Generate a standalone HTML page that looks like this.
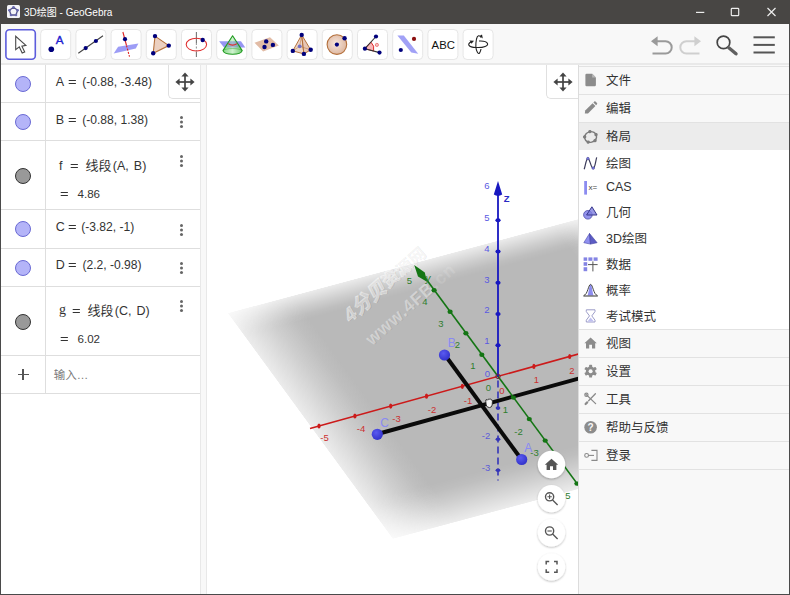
<!DOCTYPE html>
<html lang="zh-CN">
<head>
<meta charset="utf-8">
<title>3D绘图 - GeoGebra</title>
<style>
*{box-sizing:border-box;margin:0;padding:0}
html,body{width:790px;height:595px;overflow:hidden;background:#fff}
body{font-family:"Liberation Sans","Noto Sans CJK SC",sans-serif;color:#333;position:relative}
#win{position:absolute;left:0;top:0;width:790px;height:595px;overflow:hidden;background:#fff}
.abs{position:absolute}
/* title bar */
#title{left:0;top:0;width:790px;height:24px;background:#484644;color:#fff;font-size:10px;line-height:26px}
#title .txt{position:absolute;left:24px;top:0;white-space:nowrap;letter-spacing:0}
/* toolbar */
#toolbar{left:0;top:24px;width:790px;height:41px;background:#f8f8f8;border-bottom:2px solid #e9e9e9}
.tb{position:absolute;top:5px;width:31px;height:31px;border:1px solid #e2e2e2;border-radius:4px;background:#fff}
.tb.sel{border:2px solid #6161e0;border-radius:4px}
.tb svg{position:absolute;left:0;top:0;width:29px;height:29px;overflow:visible}
.tb.sel svg{left:-1px;top:-1px}
/* algebra */
#alg{left:0;top:0;width:200px;height:594px}
.hl{position:absolute;left:1px;width:199px;height:1px;background:#dedede}
.vl{position:absolute;left:45px;top:65px;width:1px;height:329px;background:#dedede}
.dot{position:absolute;left:14.7px;width:16px;height:16px;border-radius:50%;background:#b4b4f8;border:1px solid #6a6ad4}
.dot.g{background:#999;border-color:#333}
.t{position:absolute;left:0;height:16px;font-size:12.5px;line-height:16px;color:#333;white-space:nowrap}
.t span{position:absolute;top:0}
.t .eq{transform:scaleX(1.18);transform-origin:0 50%}
.t .cj{font-size:13px}
.more{position:absolute;left:180px;width:3px;height:3px;border-radius:50%;background:#666;box-shadow:0 4.5px 0 #666,0 9px 0 #666}
.mvb{position:absolute;top:65px;height:34px;border:1px solid #e0e0e0;border-top:none;border-right:none;border-bottom-left-radius:5px;background:#fff}
/* splitter */
#split{left:200px;top:65px;width:7px;height:529px;background:#f8f8f8;border-left:1px solid #e8e8e8;border-right:1px solid #e8e8e8;z-index:2}
/* 3d */
#view{left:206px;top:65px;width:372px;height:529px;background:#fff;overflow:hidden}
/* menu */
#menu{left:578px;top:65px;width:211px;height:529px;background:#f8f8f8;border-left:1px solid #dcdcdc}
.mh{position:absolute;left:0;width:210px;height:28px;border-top:1px solid #e2e2e2;font-size:12.5px;line-height:28px;color:#333}
.mh span,.mi span{position:absolute;left:27px;white-space:nowrap}
.mi{position:absolute;left:0;width:210px;height:26px;font-size:12.5px;line-height:26px;color:#333}
.mh svg,.mi svg{position:absolute;left:4px;top:6px;width:16px;height:16px;overflow:visible}
#sub{position:absolute;left:0;top:85px;width:210px;height:179px;background:#fff}
</style>
</head>
<body>
<div id="win">

<!-- TITLE -->
<div id="title" class="abs">
  <svg class="abs" style="left:7px;top:5px" width="13" height="13" viewBox="0 0 13 13">
    <rect x="0" y="0" width="13" height="13" rx="1.5" fill="#f4f4f8"/>
    <polygon points="6.5,2.2 10.6,5.2 9,10 4,10 2.4,5.2" fill="none" stroke="#55558a" stroke-width="1.3"/>
    <g fill="#6a6ab0"><circle cx="6.5" cy="2.2" r="1.3"/><circle cx="10.6" cy="5.2" r="1.3"/><circle cx="9" cy="10" r="1.3"/><circle cx="4" cy="10" r="1.3"/><circle cx="2.4" cy="5.2" r="1.3"/></g>
  </svg>
  <div class="txt">3D绘图 - GeoGebra</div>
  <svg class="abs" style="left:690px;top:0" width="100" height="24" viewBox="0 0 100 24">
    <g stroke="#ececec" stroke-width="1.2" fill="none">
      <line x1="6" y1="12.4" x2="14.3" y2="12.4"/>
      <rect x="41.3" y="8.3" width="7.4" height="7.4" rx="0.8"/>
      <path d="M77.5 8 L85.5 16 M85.5 8 L77.5 16"/>
    </g>
  </svg>
</div>

<!-- TOOLBAR -->
<div id="toolbar" class="abs">
<svg class="abs" style="left:0;top:0" width="790" height="41" viewBox="0 24 790 41" font-family="Liberation Sans, sans-serif">
  <defs>
    <radialGradient id="sg" cx="0.45" cy="0.45" r="0.6"><stop offset="0" stop-color="#f6e6dc"/><stop offset="1" stop-color="#dcb49c"/></radialGradient>
    <linearGradient id="cg" x1="0" y1="0" x2="1" y2="0"><stop offset="0" stop-color="#6fd06f"/><stop offset="0.5" stop-color="#c8f0c8"/><stop offset="1" stop-color="#58c058"/></linearGradient>
  </defs>
  <!-- button frames -->
  <g fill="#fff" stroke="#e6e6e6" stroke-width="1">
    <rect x="40.7" y="29.5" width="30" height="30" rx="4"/><rect x="75.9" y="29.5" width="30" height="30" rx="4"/><rect x="111.1" y="29.5" width="30" height="30" rx="4"/>
    <rect x="146.3" y="29.5" width="30" height="30" rx="4"/><rect x="181.5" y="29.5" width="30" height="30" rx="4"/><rect x="216.7" y="29.5" width="30" height="30" rx="4"/>
    <rect x="251.9" y="29.5" width="30" height="30" rx="4"/><rect x="287.1" y="29.5" width="30" height="30" rx="4"/><rect x="322.3" y="29.5" width="30" height="30" rx="4"/>
    <rect x="357.5" y="29.5" width="30" height="30" rx="4"/><rect x="392.7" y="29.5" width="30" height="30" rx="4"/><rect x="427.9" y="29.5" width="30" height="30" rx="4"/>
    <rect x="463.1" y="29.5" width="30" height="30" rx="4"/>
  </g>
  <rect x="5.9" y="29.7" width="29.4" height="29.6" rx="3.5" fill="#fff" stroke="#5c5cdc" stroke-width="1.6"/>
  <!-- 0 move -->
  <path d="M15.7 36.3 L15.7 49.6 L19.3 46.9 L22.2 53 L24.7 51.9 L21.9 46.2 L25.9 45.4 Z" fill="#fff" stroke="#4a4a4a" stroke-width="1.1" stroke-linejoin="miter"/>
  <!-- 1 point -->
  <circle cx="51.3" cy="49.3" r="2.8" fill="#00007c"/>
  <text x="55.8" y="44.4" font-size="11.6" fill="#2020d0" stroke="#2020d0" stroke-width="0.35">A</text>
  <!-- 2 line -->
  <line x1="78.3" y1="53.2" x2="103" y2="35.8" stroke="#444" stroke-width="1.1"/>
  <circle cx="85.7" cy="48.1" r="2.1" fill="#00007c"/><circle cx="95.9" cy="41" r="2.1" fill="#00007c"/>
  <!-- 3 perpendicular -->
  <line x1="122.9" y1="32" x2="126.5" y2="45.5" stroke="#e02020" stroke-width="1.1"/>
  <polygon points="113.7,53.5 118.1,46.8 138.4,43.4 135.8,48.5" fill="#8c8cf4" fill-opacity="0.85"/>
  <line x1="126.5" y1="45.5" x2="129.5" y2="56.7" stroke="#e02020" stroke-width="1.1" stroke-dasharray="2 1.3"/>
  <circle cx="125" cy="39.2" r="2.1" fill="#00007c"/>
  <!-- 4 polygon -->
  <polygon points="155,36.1 168.8,45.6 153.2,53.2" fill="#ecd0c0" stroke="#b4703c" stroke-width="1.1"/>
  <circle cx="155" cy="36.1" r="2.2" fill="#00007c"/><circle cx="168.8" cy="45.6" r="2.2" fill="#00007c"/><circle cx="153.2" cy="53.2" r="2.2" fill="#00007c"/>
  <!-- 5 circle axis -->
  <line x1="196.4" y1="32" x2="196.4" y2="43" stroke="#777" stroke-width="1.1"/>
  <line x1="196.4" y1="43" x2="196.4" y2="51" stroke="#999" stroke-width="1.1" stroke-dasharray="2 1.5"/>
  <line x1="196.4" y1="51.5" x2="196.4" y2="57" stroke="#777" stroke-width="1.1"/>
  <ellipse cx="196.4" cy="44.6" rx="10.2" ry="6.4" fill="none" stroke="#e03030" stroke-width="1.1"/>
  <circle cx="202.7" cy="40" r="2.2" fill="#00007c"/>
  <!-- 6 cone -->
  <polygon points="219.1,41.2 241,41.2 245.3,47.6 224,47.6" fill="#7c7cf0" fill-opacity="0.8"/>
  <path d="M232.6 35.8 L223 50.6 A9.7 4.2 0 0 0 242.2 50.6 Z" fill="url(#cg)" fill-opacity="0.85" stroke="#1e9a1e" stroke-width="1.1" stroke-linejoin="round"/>
  <path d="M223 50.6 A9.7 2.4 0 0 1 242.2 50.6" fill="none" stroke="#1e9a1e" stroke-width="0.7" stroke-opacity="0.6"/>
  <path d="M226.5 47.6 L238.8 47.6 L236.5 41.2 L228.7 41.2 Z" fill="#6a6adc" fill-opacity="0.35"/>
  <path d="M228.2 43.6 Q232.6 46.6 237 43.6" fill="none" stroke="#e02828" stroke-width="1.1"/>
  <!-- 7 plane 3 pts -->
  <polygon points="254.5,42.8 270,37.2 278.8,45.6 263.1,51.4" fill="#e2bca6"/>
  <circle cx="266.2" cy="41.4" r="2.2" fill="#00007c"/><circle cx="272.9" cy="44.9" r="2.2" fill="#00007c"/><circle cx="264.5" cy="47" r="2.2" fill="#00007c"/>
  <!-- 8 pyramid -->
  <g stroke="#b4703c" stroke-width="1" stroke-linejoin="round">
    <polygon points="301.7,34.9 292.8,50.9 303.9,53.9" fill="#ecd0c0" fill-opacity="0.9"/>
    <polygon points="301.7,34.9 303.9,53.9 310.7,49.8" fill="#e4c0ac" fill-opacity="0.9"/>
    <path d="M292.8 50.9 L299.7 46.3 L310.7 49.8 M299.7 46.3 L301.7 34.9" fill="none" stroke-width="0.7" stroke-opacity="0.7"/>
  </g>
  <circle cx="299.7" cy="46.3" r="1.9" fill="#7070c8"/>
  <circle cx="301.7" cy="34.9" r="2.2" fill="#00007c"/><circle cx="292.8" cy="50.9" r="2.2" fill="#00007c"/><circle cx="303.9" cy="53.9" r="2.2" fill="#00007c"/><circle cx="310.7" cy="49.8" r="2.2" fill="#00007c"/>
  <!-- 9 sphere -->
  <circle cx="336.9" cy="44.6" r="9.8" fill="url(#sg)" stroke="#b4703c" stroke-width="1.1"/>
  <circle cx="336.9" cy="44.6" r="2.1" fill="#00007c"/><circle cx="344.6" cy="38.3" r="2.2" fill="#00007c"/>
  <!-- 10 angle -->
  <path d="M364.9 48.7 L370.9 42.1 A9 9 0 0 1 373.6 51 Z" fill="#f8b8b8" stroke="#e03030" stroke-width="1"/>
  <line x1="364.9" y1="48.7" x2="376" y2="36.5" stroke="#333" stroke-width="1.1"/><line x1="364.9" y1="48.7" x2="379.5" y2="52.6" stroke="#333" stroke-width="1.1"/>
  <circle cx="376.9" cy="44.9" r="1.6" fill="#f8c0c0" stroke="#e86060" stroke-width="0.7"/>
  <circle cx="364.9" cy="48.7" r="2.1" fill="#00007c"/><circle cx="376" cy="36.5" r="2.1" fill="#00007c"/><circle cx="379.5" cy="52.6" r="2.1" fill="#00007c"/>
  <!-- 11 reflect -->
  <polygon points="397.4,35.6 403.8,35.6 418.2,53.7 411.3,52.4" fill="#9090f4" fill-opacity="0.85"/>
  <circle cx="414" cy="38.9" r="2.1" fill="#8c1010"/><circle cx="400.8" cy="50" r="2.1" fill="#00007c"/>
  <!-- 12 ABC -->
  <text x="431.6" y="48.8" font-size="11.3" fill="#111">ABC</text>
  <!-- 13 rotate view -->
  <g fill="none" stroke="#222" stroke-width="1.1">
    <path d="M471 42 C467 44 468 47 476 47.5 C484 48 488.5 45.5 487.5 43.5 C486.5 41.5 482 40.8 479 41"/>
    <path d="M481 37.5 C479.5 35 477.5 35 476.5 39 C475.5 44 476 50 477.5 52.5 C479 55 480.5 52 481 49"/>
  </g>
  <polygon points="469.5,40.5 474,40.8 471.5,43.8" fill="#222"/><polygon points="479.5,36 482.8,38.5 482,34.5" fill="#222"/>
  <!-- undo -->
  <g fill="none" stroke-width="2" stroke-linejoin="miter">
    <path d="M656 41.2 H665.5 A6.2 6.2 0 0 1 665.5 53.6 H652.5" stroke="#9a9a9a"/>
    <path d="M657.6 36.2 L651 41.2 L657.6 46.2 Z" fill="#9a9a9a" stroke="none"/>
    <path d="M696 41.2 H686.5 A6.2 6.2 0 0 0 686.5 53.6 H699.5" stroke="#cfcfcf"/>
    <path d="M694.4 36.2 L701 41.2 L694.4 46.2 Z" fill="#cfcfcf" stroke="none"/>
  </g>
  <!-- search -->
  <circle cx="723.5" cy="42.4" r="6.3" fill="none" stroke="#444" stroke-width="1.7"/>
  <line x1="728.8" y1="47.8" x2="736" y2="53.8" stroke="#606060" stroke-width="3.4" stroke-linecap="round"/>
  <!-- menu -->
  <g stroke="#555" stroke-width="2"><line x1="753.5" y1="37.3" x2="774.8" y2="37.3"/><line x1="753.5" y1="44.9" x2="774.8" y2="44.9"/><line x1="753.5" y1="52.5" x2="774.8" y2="52.5"/></g>
</svg>
</div>

<!-- ALGEBRA -->
<div id="alg" class="abs">
  <div class="hl" style="top:102px"></div><div class="hl" style="top:140px"></div><div class="hl" style="top:209px"></div>
  <div class="hl" style="top:248px"></div><div class="hl" style="top:286px"></div><div class="hl" style="top:355px"></div><div class="hl" style="top:393px"></div>
  <div class="vl"></div>
  <div class="dot" style="top:75.5px"></div>
  <div class="dot" style="top:113.5px"></div>
  <div class="dot g" style="top:167.5px"></div>
  <div class="dot" style="top:221px"></div>
  <div class="dot" style="top:259.5px"></div>
  <div class="dot g" style="top:313.5px"></div>
  <div class="t" style="top:74px"><span style="left:55.7px">A</span><span class="eq" style="left:67.6px">=</span><span style="left:82.2px;font-size:12.1px">(-0.88, -3.48)</span></div>
  <div class="t" style="top:112px"><span style="left:55.7px">B</span><span class="eq" style="left:67.6px">=</span><span style="left:82.2px;font-size:12.1px">(-0.88, 1.38)</span></div>
  <div class="t" style="top:157.5px"><span style="left:59px">f</span><span class="eq" style="left:70.3px">=</span><span class="cj" style="left:85.4px">线段</span><span style="left:112.8px;word-spacing:1.6px">(A, B)</span></div>
  <div class="t" style="top:185.5px"><span class="eq" style="left:60.4px">=</span><span style="left:77.5px;font-size:11.6px">4.86</span></div>
  <div class="t" style="top:219px"><span style="left:55.7px">C</span><span class="eq" style="left:67.8px">=</span><span style="left:81.2px;font-size:12.1px">(-3.82, -1)</span></div>
  <div class="t" style="top:257px"><span style="left:55.7px">D</span><span class="eq" style="left:68.2px">=</span><span style="left:82.4px;font-size:12.1px">(2.2, -0.98)</span></div>
  <div class="t" style="top:303px"><span style="left:59px;font-family:'Liberation Serif',serif;font-size:14px;top:-1.5px">g</span><span class="eq" style="left:71.6px">=</span><span class="cj" style="left:87.4px">线段</span><span style="left:114.8px;word-spacing:1.6px">(C, D)</span></div>
  <div class="t" style="top:331px"><span class="eq" style="left:60.4px">=</span><span style="left:77.5px;font-size:11.6px">6.02</span></div>
  <div class="t" style="top:366.5px"><span style="left:53.8px;color:#7a7a7a;font-size:11.5px">输入…</span></div>
  <div class="more" style="top:116px"></div><div class="more" style="top:154.5px"></div><div class="more" style="top:223.5px"></div><div class="more" style="top:262px"></div><div class="more" style="top:300px"></div>
  <div class="abs" style="left:17.5px;top:374px;width:11px;height:1.2px;background:#555"></div><div class="abs" style="left:22.4px;top:369px;width:1.2px;height:11px;background:#555"></div>
  <div class="mvb" style="left:168px;width:32px"><svg class="abs" style="left:6.1px;top:6.8px" width="20" height="20" viewBox="0 0 20 20"><g fill="#444"><rect x="9.15" y="3" width="1.7" height="14"/><rect x="3" y="9.15" width="14" height="1.7"/><polygon points="10,0.4 13.6,4.6 6.4,4.6"/><polygon points="10,19.6 13.6,15.4 6.4,15.4"/><polygon points="0.4,10 4.6,6.4 4.6,13.6"/><polygon points="19.6,10 15.4,6.4 15.4,13.6"/></g></svg></div>
</div>

<div id="split" class="abs"></div>

<!-- 3D VIEW -->
<div id="view" class="abs">
<svg class="abs" style="left:0;top:0" width="372" height="529" viewBox="206 65 372 529" font-family="Liberation Sans, sans-serif">
  <defs>
    <linearGradient id="gl" gradientUnits="userSpaceOnUse" x1="0" y1="0" x2="1.05" y2="0">
      <stop offset="0" stop-color="#bdbdbd" stop-opacity="0.16"/><stop offset="0.5" stop-color="#bdbdbd" stop-opacity="0.68"/><stop offset="1" stop-color="#bdbdbd" stop-opacity="1"/>
    </linearGradient>
    <linearGradient id="gt" gradientUnits="userSpaceOnUse" x1="0" y1="0" x2="0" y2="1.05">
      <stop offset="0" stop-color="#bdbdbd" stop-opacity="0.16"/><stop offset="0.5" stop-color="#bdbdbd" stop-opacity="0.68"/><stop offset="1" stop-color="#bdbdbd" stop-opacity="1"/>
    </linearGradient>
    <linearGradient id="gb" gradientUnits="userSpaceOnUse" x1="0" y1="10.4" x2="0" y2="9.35">
      <stop offset="0" stop-color="#bdbdbd" stop-opacity="0.16"/><stop offset="0.5" stop-color="#bdbdbd" stop-opacity="0.68"/><stop offset="1" stop-color="#bdbdbd" stop-opacity="1"/>
    </linearGradient>
    <linearGradient id="gr" gradientUnits="userSpaceOnUse" x1="10.4" y1="0" x2="9.35" y2="0">
      <stop offset="0" stop-color="#bdbdbd" stop-opacity="0.16"/><stop offset="0.5" stop-color="#bdbdbd" stop-opacity="0.68"/><stop offset="1" stop-color="#bdbdbd" stop-opacity="1"/>
    </linearGradient>
    <filter id="soft" x="-5%" y="-5%" width="110%" height="110%"><feGaussianBlur stdDeviation="0.5"/></filter>
    <radialGradient id="sph" cx="0.4" cy="0.35" r="0.7">
      <stop offset="0" stop-color="#5a5af0"/>
      <stop offset="1" stop-color="#3030c8"/>
    </radialGradient>
  </defs>
  <!-- plane -->
  <defs><linearGradient id="gu" x1="0" y1="0" x2="1" y2="0"><stop offset="0.0000" stop-color="#b9b9b9" stop-opacity="0.270"/><stop offset="0.0865" stop-color="#b9b9b9" stop-opacity="0.700"/><stop offset="0.1385" stop-color="#b9b9b9" stop-opacity="0.920"/><stop offset="0.1731" stop-color="#b9b9b9" stop-opacity="1.000"/><stop offset="0.8750" stop-color="#b9b9b9" stop-opacity="1.000"/><stop offset="0.9000" stop-color="#b9b9b9" stop-opacity="0.920"/><stop offset="0.9375" stop-color="#b9b9b9" stop-opacity="0.700"/><stop offset="1.0000" stop-color="#b9b9b9" stop-opacity="0.270"/></linearGradient><linearGradient id="gv" x1="0" y1="0" x2="0" y2="1"><stop offset="0.0000" stop-color="#fff" stop-opacity="0.270"/><stop offset="0.0505" stop-color="#fff" stop-opacity="0.700"/><stop offset="0.0808" stop-color="#fff" stop-opacity="0.920"/><stop offset="0.1010" stop-color="#fff" stop-opacity="1.000"/><stop offset="0.8365" stop-color="#fff" stop-opacity="1.000"/><stop offset="0.8692" stop-color="#fff" stop-opacity="0.920"/><stop offset="0.9183" stop-color="#fff" stop-opacity="0.700"/><stop offset="1.0000" stop-color="#fff" stop-opacity="0.270"/></linearGradient><mask id="mv" maskUnits="userSpaceOnUse" x="0" y="0" width="10.4" height="10.4"><rect x="0" y="0" width="10.4" height="10.4" fill="url(#gv)"/></mask></defs>
  <g transform="matrix(35.8,-9.6,15.885,21.73,227.5,313)"><g mask="url(#mv)"><rect x="0" y="0" width="10.4" height="10.4" fill="url(#gu)"/></g></g>
  <!-- watermark -->
  <g font-family="Liberation Sans, Noto Sans CJK SC, sans-serif" font-weight="900">
    <g transform="translate(350.5,323) rotate(-41.4)">
      <text x="1" y="1.2" font-size="19.5" font-style="italic" fill="#000" fill-opacity="0.07">4分贝<tspan font-size="17" font-style="normal" dx="1" dy="-1">资源网</tspan></text>
      <text x="0" y="0" font-size="19.5" font-style="italic" fill="#fff" fill-opacity="0.4" stroke="#fff" stroke-opacity="0.4" stroke-width="0.7">4分贝<tspan font-size="17" font-style="normal" dx="1" dy="-1">资源网</tspan></text>
    </g>
    <g transform="translate(372,346) rotate(-41.4)" font-weight="bold">
      <text x="1" y="1.2" font-size="17.5" letter-spacing="1" fill="#000" fill-opacity="0.06">www.4FB<tspan fill-opacity="0.02">.cn</tspan></text>
      <text x="0" y="0" font-size="17.5" letter-spacing="1" fill="#fff" fill-opacity="0.38">www.4FB<tspan fill-opacity="0.14">.cn</tspan></text>
    </g>
  </g>
  <!-- x axis red -->
  <g stroke="#cc1a1a" fill="#cc1a1a">
    <line x1="310" y1="428.4" x2="580" y2="353.6" stroke-width="1.6"/>
    <g stroke="none">
      <ellipse cx="319" cy="426" rx="1.6" ry="2.6"/><ellipse cx="354.9" cy="416" rx="1.6" ry="2.6"/><ellipse cx="390.7" cy="406.1" rx="1.6" ry="2.6"/>
      <ellipse cx="426.5" cy="396.2" rx="1.6" ry="2.6"/><ellipse cx="462.3" cy="386.3" rx="1.6" ry="2.6"/><ellipse cx="533.9" cy="366.4" rx="1.6" ry="2.6"/><ellipse cx="569.7" cy="356.5" rx="1.6" ry="2.6"/>
    </g>
  </g>
  <g fill="#cc3030" font-size="9.5" text-anchor="middle">
    <text x="324.5" y="441.3">-5</text><text x="361" y="432.3">-4</text><text x="396.5" y="422.3">-3</text><text x="432" y="413.3">-2</text>
    <text x="468" y="403.5">-1</text><text x="502" y="393.5">0</text><text x="536.5" y="383.3">1</text><text x="572" y="374.3">2</text>
  </g>
  <!-- z axis dashed lower -->
  <g stroke="#3535b8" fill="#3535b8">
    <line x1="498" y1="380.6" x2="498" y2="480.6" stroke-width="1.6" stroke-dasharray="7 4"/>
    <g stroke="none"><ellipse cx="498" cy="408.1" rx="2.4" ry="1.8"/><ellipse cx="498" cy="439.3" rx="2.4" ry="1.8"/><ellipse cx="498" cy="470.2" rx="2.4" ry="1.8"/></g>
  </g>
  <g fill="#5c5cd8" font-size="9.5" text-anchor="middle">
    <text x="486" y="439.1">-2</text><text x="486" y="470.6">-3</text>
  </g>
  <!-- segments -->
  <g stroke="#0a0a0a" stroke-width="4" stroke-linecap="butt">
    <line x1="377.5" y1="434" x2="580" y2="378.2"/>
    <line x1="445" y1="355" x2="521.5" y2="459.5"/>
  </g>
  <!-- y axis green -->
  <g stroke="#147514" fill="#147514">
    <line x1="420" y1="270.8" x2="578" y2="484.8" stroke-width="1.6"/>
    <polygon points="414.2,264.9 424.8,272.4 427,281.8 418,276.6" stroke="none"/>
    <g stroke="none">
      <ellipse cx="434.1" cy="290.2" rx="2.6" ry="2.2"/><ellipse cx="450.1" cy="311.8" rx="2.6" ry="2.2"/><ellipse cx="465.9" cy="333.3" rx="2.6" ry="2.2"/><ellipse cx="481.8" cy="354.8" rx="2.6" ry="2.2"/>
      <ellipse cx="513.4" cy="397.6" rx="2.6" ry="2.2"/><ellipse cx="529.3" cy="419.1" rx="2.6" ry="2.2"/><ellipse cx="545.2" cy="440.6" rx="2.6" ry="2.2"/><ellipse cx="561" cy="462.1" rx="2.6" ry="2.2"/><ellipse cx="576.9" cy="483.6" rx="2.6" ry="2.2"/>
    </g>
  </g>
  <g fill="#2e7d2e" font-size="9.5" text-anchor="middle">
    <text x="409.5" y="284.3">5</text><text x="425" y="305.3">4</text><text x="441" y="326.8">3</text><text x="457.5" y="348">2</text><text x="473" y="369.3">1</text><text x="488.5" y="391">0</text>
    <text x="505.5" y="413.3">1</text><text x="518.5" y="434.8">-2</text><text x="534.5" y="456.3">-3</text><text x="568" y="499.3">5</text>
    <text x="428" y="281.8" font-size="10" font-style="italic">y</text>
  </g>
  <!-- z axis blue upper -->
  <g stroke="#1818c0" fill="#1818c0">
    <line x1="498" y1="191" x2="498" y2="376.4" stroke-width="1.8"/>
    <path d="M498 181.1 L502.2 194.6 Q498 197.2 493.8 194.6 Z" stroke="none"/>
    <g stroke="none"><ellipse cx="498" cy="220.3" rx="2.6" ry="2"/><ellipse cx="498" cy="251.5" rx="2.6" ry="2"/><ellipse cx="498" cy="282.8" rx="2.6" ry="2"/><ellipse cx="498" cy="314" rx="2.6" ry="2"/><ellipse cx="498" cy="345.2" rx="2.6" ry="2"/></g>
    <circle cx="498" cy="376.4" r="2.2" fill="none" stroke="#702040" stroke-width="1"/>
  </g>
  <g fill="#5a5ae2" font-size="9.5" text-anchor="middle">
    <text x="487" y="189.2">6</text><text x="487" y="220.7">5</text><text x="487" y="251.6">4</text><text x="487" y="282.5">3</text><text x="487" y="313.3">2</text><text x="487" y="344">1</text><text x="487.5" y="376.8">0</text>
    <text x="506.6" y="202.4" font-size="9.5" font-weight="bold" fill="#2a2ac4">Z</text>
  </g>
  <!-- points -->
  <circle cx="444.5" cy="355" r="5.6" fill="url(#sph)"/>
  <circle cx="521.7" cy="459.5" r="5.6" fill="url(#sph)"/>
  <circle cx="377.3" cy="434.3" r="5.6" fill="url(#sph)"/>
  <g fill="#8a8af2" font-size="12">
    <text x="447.8" y="346.6">B</text><text x="524.3" y="452">A</text><text x="380.3" y="426.8">C</text>
  </g>
  <path d="M485.8 401.5 Q485.2 399.4 487 399.6 L487.6 400.2 Q488 398.6 489.4 399.2 Q490.4 398.6 491 399.6 Q492.6 399.6 492.4 401.4 L492.2 405 Q491.6 407.6 489.4 407.6 Q486.8 407.4 486.2 405 Z" fill="#f4f4f4" stroke="#222" stroke-width="0.9"/>
  <!-- view buttons -->
  <defs><filter id="bsh" x="-30%" y="-30%" width="160%" height="170%"><feGaussianBlur in="SourceAlpha" stdDeviation="1.3"/><feOffset dy="1"/><feComponentTransfer><feFuncA type="linear" slope="0.28"/></feComponentTransfer><feMerge><feMergeNode/><feMergeNode in="SourceGraphic"/></feMerge></filter></defs>
  <g filter="url(#bsh)" fill="#fff"><circle cx="551.5" cy="464.5" r="13.7"/><circle cx="551.5" cy="498.6" r="13.7"/><circle cx="551.5" cy="532.8" r="13.7"/><circle cx="551.5" cy="566.9" r="13.7"/></g>
  <path d="M551.5 458.7 L558.2 464.8 H556.4 V470 H553 V466.2 H550 V470 H546.6 V464.8 H544.8 Z" fill="#555"/>
  <g fill="none" stroke="#555" stroke-width="1.4">
    <circle cx="549.6" cy="496.8" r="4.1"/><line x1="552.6" y1="499.9" x2="557.6" y2="504.9"/>
    <path d="M547.4 496.8 H551.8 M549.6 494.6 V499" stroke-width="1.1"/>
    <circle cx="549.6" cy="531" r="4.1"/><line x1="552.6" y1="534.1" x2="557.6" y2="539.1"/>
    <path d="M547.4 531 H551.8" stroke-width="1.1"/>
    <path d="M546.2 564.4 V561.4 H549.2 M554 561.4 H557 V564.4 M557 569.2 V572.2 H554 M549.2 572.2 H546.2 V569.2" stroke-width="1.5"/>
  </g>
</svg>
</div>

<div class="mvb" style="left:546px;width:32px"><svg class="abs" style="left:5.8px;top:6.8px" width="20" height="20" viewBox="0 0 20 20"><g fill="#444"><rect x="9.15" y="3" width="1.7" height="14"/><rect x="3" y="9.15" width="14" height="1.7"/><polygon points="10,0.4 13.6,4.6 6.4,4.6"/><polygon points="10,19.6 13.6,15.4 6.4,15.4"/><polygon points="0.4,10 4.6,6.4 4.6,13.6"/><polygon points="19.6,10 15.4,6.4 15.4,13.6"/></g></svg></div>

<!-- MENU -->
<div id="menu" class="abs">
  <div class="mh" style="top:1px"><span>文件</span></div>
  <div class="mh" style="top:29px"><span>编辑</span></div>
  <div class="mh" style="top:57px;background:#ececec"><span>格局</span></div>
  <div id="sub">
    <div class="mi" style="top:1px"><span>绘图</span></div>
    <div class="mi" style="top:24px"><span>CAS</span></div>
    <div class="mi" style="top:50px"><span>几何</span></div>
    <div class="mi" style="top:76px"><span>3D绘图</span></div>
    <div class="mi" style="top:102px"><span>数据</span></div>
    <div class="mi" style="top:128px"><span>概率</span></div>
    <div class="mi" style="top:154px"><span>考试模式</span></div>
  </div>
  <div class="mh" style="top:264px"><span>视图</span></div>
  <div class="mh" style="top:292px"><span>设置</span></div>
  <div class="mh" style="top:320px"><span>工具</span></div>
  <div class="mh" style="top:348px"><span>帮助与反馈</span></div>
  <div class="mh" style="top:376px"><span>登录</span></div>
  <div class="mh" style="top:404px;height:1px"></div>
  <svg class="abs" style="left:-1px;top:0" width="212" height="529" viewBox="578 65 212 529" font-family="Liberation Sans, sans-serif">
    <!-- file -->
    <path d="M586.6 73.8 H592.2 L595.9 77.5 V85 Q595.9 86.2 594.7 86.2 H586.6 Q585.4 86.2 585.4 85 V75 Q585.4 73.8 586.6 73.8 Z" fill="#8c8c8c"/>
    <path d="M592.2 73.8 V77.5 H595.9 Z" fill="#b8b8b8"/>
    <!-- pencil -->
    <path d="M584.8 113.6 L585.2 110.6 L592.6 103.2 L595.4 106 L588 113.4 Z" fill="#8a8a8a"/>
    <path d="M593.4 102.4 L594.3 101.5 Q594.9 101 595.5 101.6 L597 103.1 Q597.5 103.7 597 104.3 L596.1 105.2 Z" fill="#8a8a8a"/>
    <!-- pentagon -->
    <g transform="translate(590.6,137) rotate(-12)">
      <ellipse cx="0" cy="0" rx="6" ry="5.3" fill="none" stroke="#7c7c7c" stroke-width="1.4"/>
      <g fill="#7c7c7c"><circle cx="0.4" cy="-5.4" r="1.7"/><circle cx="5.8" cy="-1.2" r="1.7"/><circle cx="3.6" cy="4.4" r="1.7"/><circle cx="-3.4" cy="4.5" r="1.7"/><circle cx="-5.8" cy="-1.4" r="1.7"/></g>
    </g>
    <!-- graphing -->
    <path d="M584.2 169.2 C585.5 165 586.3 158.3 587.9 158.3 C589.8 158.3 591 168.4 593.2 168.4 C595 168.4 595.6 161 596.7 157.4" fill="none" stroke="#3a3a5a" stroke-width="1.2"/>
    <circle cx="587.9" cy="158.6" r="1.3" fill="#7a7ae0" stroke="#3a3a8a" stroke-width="0.5"/><circle cx="593.2" cy="168.1" r="1.3" fill="#7a7ae0" stroke="#3a3a8a" stroke-width="0.5"/>
    <!-- CAS -->
    <rect x="584.2" y="181" width="2.8" height="13.6" fill="#8c8cf0"/>
    <text x="588.4" y="190.4" font-size="8" fill="#444">x=</text>
    <!-- geometry -->
    <circle cx="587.9" cy="214.8" r="4.3" fill="#9494ec" stroke="#4a4aa8" stroke-width="0.8"/>
    <polygon points="591.9,206.8 597,215 586.6,215" fill="#8080e0" fill-opacity="0.8" stroke="#38388c" stroke-width="1" stroke-linejoin="round"/>
    <!-- 3D -->
    <polygon points="589.5,233.5 583.8,242.7 590.5,244.1" fill="#9090f0" stroke="#4848a8" stroke-width="0.6" stroke-linejoin="round"/>
    <polygon points="589.5,233.5 590.5,244.1 597.1,242.7" fill="#5c5cc4" stroke="#4040a0" stroke-width="0.6" stroke-linejoin="round"/>
    <!-- spreadsheet -->
    <g fill="#8484e4"><rect x="583.6" y="257.4" width="3.6" height="3.4"/><rect x="588.4" y="257.4" width="4" height="3.4"/><rect x="593.6" y="257.4" width="4" height="3.4"/><rect x="583.6" y="262.2" width="3.6" height="3.6"/><rect x="583.6" y="267.2" width="3.6" height="4"/></g>
    <path d="M588 264.6 H597.6 M592.9 261.4 V271.4" stroke="#555" stroke-width="1" fill="none"/>
    <!-- probability -->
    <path d="M587.6 295.4 C588.8 293 589.2 284.6 590.6 284.6 C592 284.6 592.4 293 593.6 295.4 Z" fill="#8c8cf0"/>
    <path d="M583.8 295.4 C587.6 295 588.4 284.4 590.6 284.4 C592.8 284.4 593.6 295 597.4 295.4" fill="none" stroke="#444" stroke-width="1"/>
    <line x1="583.4" y1="296" x2="597.8" y2="296" stroke="#444" stroke-width="1.1"/>
    <!-- hourglass -->
    <path d="M586.3 309.8 H595 V311.6 L591.8 315.9 L595 320.2 V322 H586.3 V320.2 L589.5 315.9 L586.3 311.6 Z" fill="#fff" stroke="#9c9cc8" stroke-width="1" stroke-linejoin="round"/>
    <path d="M587.4 321.4 L590.6 317.6 L593.9 321.4 Z" fill="#c0c0f0"/>
    <!-- home -->
    <path d="M590.6 337.6 L596.8 343.3 H595.2 V348.6 H592 V344.8 H589.2 V348.6 H586 V343.3 H584.4 Z" fill="#8c8c8c"/>
    <!-- gear -->
    <g transform="translate(590.6,371.2)" fill="#8c8c8c">
      <g id="teeth"><rect x="-1.5" y="-6.4" width="3" height="12.8" rx="0.6"/><rect x="-1.5" y="-6.4" width="3" height="12.8" rx="0.6" transform="rotate(60)"/><rect x="-1.5" y="-6.4" width="3" height="12.8" rx="0.6" transform="rotate(120)"/></g>
      <circle r="4.7"/><circle r="2" fill="#f8f8f8"/>
    </g>
    <!-- tools -->
    <g stroke="#8a8a8a" fill="none" stroke-linecap="round">
      <path d="M586 394.4 L595.6 403.6" stroke-width="1.3"/>
      <path d="M595.4 393.8 L588.6 400.8" stroke-width="1.3"/>
      <path d="M587.2 402.4 L585.6 404" stroke-width="2.2"/>
      <circle cx="586.4" cy="394.8" r="1.6" stroke-width="1.2"/>
    </g>
    <!-- help -->
    <circle cx="590.6" cy="427.2" r="6.3" fill="#8c8c8c"/>
    <text x="590.6" y="431" font-size="10" font-weight="bold" fill="#f8f8f8" text-anchor="middle">?</text>
    <!-- login -->
    <g fill="none" stroke="#8a8a8a" stroke-width="1.1">
      <circle cx="586.6" cy="455.4" r="1.9"/><line x1="588.5" y1="455.4" x2="594" y2="455.4"/>
      <path d="M591.4 450.4 H597 V460.4 H591.4"/>
    </g>
  </svg>
</div>

<!-- window border -->
<div class="abs" style="left:0;top:24px;width:1px;height:571px;background:#4a4a4a"></div>
<div class="abs" style="left:789px;top:24px;width:1px;height:571px;background:#4a4a4a"></div>
<div class="abs" style="left:0;top:594px;width:790px;height:1px;background:#4a4a4a"></div>
</div>
</body>
</html>
